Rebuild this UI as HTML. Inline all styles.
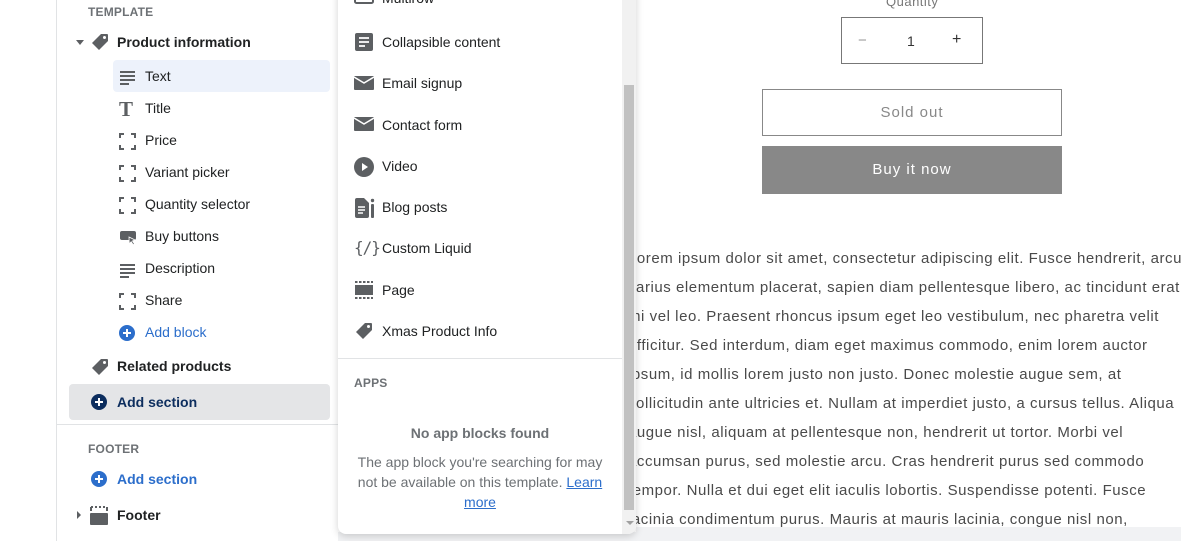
<!DOCTYPE html>
<html><head><meta charset="utf-8"><style>
*{box-sizing:border-box;margin:0;padding:0}
body{width:1181px;height:541px;overflow:hidden;background:#fff;font-family:"Liberation Sans",sans-serif;position:relative;color:#202223}
.abs{position:absolute}
.side{left:56px;top:0;width:282px;height:541px;border-left:1px solid #e1e3e5;background:#fff}
.hdr{font-size:12px;font-weight:bold;color:#6d7175;letter-spacing:0.2px}
.row{position:absolute;font-size:14px;display:flex;align-items:center}
.ico{position:absolute}
.b{font-weight:bold}
.blue{color:#2c6ecb}
.pop{left:338px;top:-10px;width:298px;height:544px;background:#fff;border-radius:0 0 8px 8px;box-shadow:0 2px 8px rgba(0,0,0,.18);z-index:5;overflow:hidden}
.pi{position:absolute;left:44px;font-size:14px;color:#202223}
.lorem{left:628px;font-size:15px;color:#4a4a4a;white-space:nowrap;letter-spacing:0.55px}
</style></head><body>
<div class="abs side">
  <div class="abs hdr" style="left:31px;top:5px">TEMPLATE</div>
  <svg class="ico" style="left:18px;top:38px" width="10" height="8"><path d="M1 2h8L5 7z" fill="#5c5f62"/></svg>
  <svg class="ico" style="left:33px;top:32px" width="20" height="20"><path d="M11 2h6a1 1 0 0 1 1 1v6l-9 9-7-7z" fill="#5c5f62"/><circle cx="14.5" cy="5.5" r="1.5" fill="#fff"/></svg>
  <div class="row b" style="left:60px;top:33px;height:18px">Product information</div>
  <div class="abs" style="left:56px;top:60px;width:217px;height:32px;background:#edf2fb;border-radius:4px"></div>
  <svg class="ico" style="left:62px;top:69px" width="18" height="16"><path d="M1 3h15M1 7h15M1 11h15M1 15h9" stroke="#5c5f62" stroke-width="2"/></svg>
  <div class="row" style="left:88px;top:68px">Text</div>
  <div class="ico b" style="left:62px;top:97px;font-family:'Liberation Serif',serif;font-size:21px;color:#5c5f62">T</div>
  <div class="row" style="left:88px;top:100px">Title</div>
  <svg class="ico" style="left:62px;top:133px" width="17" height="17"><path d="M1 5V1h4M12 1h4v4M16 12v4h-4M5 16H1v-4" stroke="#5c5f62" stroke-width="2" fill="none"/></svg>
  <div class="row" style="left:88px;top:132px">Price</div>
  <svg class="ico" style="left:62px;top:165px" width="17" height="17"><path d="M1 5V1h4M12 1h4v4M16 12v4h-4M5 16H1v-4" stroke="#5c5f62" stroke-width="2" fill="none"/></svg>
  <div class="row" style="left:88px;top:164px">Variant picker</div>
  <svg class="ico" style="left:62px;top:197px" width="17" height="17"><path d="M1 5V1h4M12 1h4v4M16 12v4h-4M5 16H1v-4" stroke="#5c5f62" stroke-width="2" fill="none"/></svg>
  <div class="row" style="left:88px;top:196px">Quantity selector</div>
  <svg class="ico" style="left:62px;top:230px" width="18" height="16"><rect x="1" y="1" width="16" height="9" rx="2" fill="#5c5f62"/><path d="M10 7l6 3-2.5 1 2 3-1.3.8-2-3-2 2z" fill="#5c5f62" stroke="#fff" stroke-width=".8"/></svg>
  <div class="row" style="left:88px;top:228px">Buy buttons</div>
  <svg class="ico" style="left:62px;top:262px" width="18" height="16"><path d="M1 3h15M1 7h15M1 11h15M1 15h9" stroke="#5c5f62" stroke-width="2"/></svg>
  <div class="row" style="left:88px;top:260px">Description</div>
  <svg class="ico" style="left:62px;top:293px" width="17" height="17"><path d="M1 5V1h4M12 1h4v4M16 12v4h-4M5 16H1v-4" stroke="#5c5f62" stroke-width="2" fill="none"/></svg>
  <div class="row" style="left:88px;top:292px">Share</div>
  <svg class="ico" style="left:62px;top:325px" width="16" height="16"><circle cx="8" cy="8" r="8" fill="#2c6ecb"/><path d="M8 4v8M4 8h8" stroke="#fff" stroke-width="2"/></svg>
  <div class="row blue" style="left:88px;top:324px">Add block</div>
  <svg class="ico" style="left:33px;top:357px" width="20" height="20"><path d="M11 2h6a1 1 0 0 1 1 1v6l-9 9-7-7z" fill="#5c5f62"/><circle cx="14.5" cy="5.5" r="1.5" fill="#fff"/></svg>
  <div class="row b" style="left:60px;top:358px">Related products</div>
  <div class="abs" style="left:12px;top:384px;width:261px;height:36px;background:#e4e5e7;border-radius:4px"></div>
  <svg class="ico" style="left:34px;top:394px" width="16" height="16"><circle cx="8" cy="8" r="8" fill="#0c2d5e"/><path d="M8 4v8M4 8h8" stroke="#fff" stroke-width="2"/></svg>
  <div class="row b" style="left:60px;top:394px;color:#0c2d5e">Add section</div>
  <div class="abs" style="left:0;top:424px;width:282px;height:1px;background:#e1e3e5"></div>
  <div class="abs hdr" style="left:31px;top:442px">FOOTER</div>
  <svg class="ico" style="left:34px;top:471px" width="16" height="16"><circle cx="8" cy="8" r="8" fill="#2c6ecb"/><path d="M8 4v8M4 8h8" stroke="#fff" stroke-width="2"/></svg>
  <div class="row b blue" style="left:60px;top:471px">Add section</div>
  <svg class="ico" style="left:19px;top:510px" width="6" height="10"><path d="M1 1l4 4-4 4z" fill="#5c5f62"/></svg>
  <svg class="ico" style="left:33px;top:506px" width="18" height="19"><path d="M1 1h2M5 1h2M9 1h2M13 1h2M17 1h0" stroke="#5c5f62" stroke-width="2"/><path d="M1 1v4M17 1v4" stroke="#5c5f62" stroke-width="2"/><rect x="0" y="7" width="18" height="12" rx="1" fill="#5c5f62"/></svg>
  <div class="row b" style="left:60px;top:507px">Footer</div>
</div>

<!-- preview -->
<div class="abs" style="left:636px;top:527px;width:545px;height:14px;background:#f1f2f4"></div>
<div class="abs" style="left:338px;top:532px;width:298px;height:9px;background:#f1f2f4"></div>
<div class="abs" style="left:886px;top:-6px;font-size:13px;color:#777;letter-spacing:.5px">Quantity</div>
<div class="abs" style="left:841px;top:17px;width:142px;height:47px;border:1px solid #777"></div>
<div class="abs" style="left:858px;top:32px;font-size:15px;color:#999">−</div>
<div class="abs" style="left:907px;top:33px;font-size:14px;color:#333">1</div>
<div class="abs" style="left:952px;top:31px;font-size:16px;color:#333">+</div>
<div class="abs" style="left:762px;top:89px;width:300px;height:47px;border:1px solid #888;text-align:center;line-height:46px;font-size:15px;color:#888;letter-spacing:1px">Sold out</div>
<div class="abs" style="left:762px;top:146px;width:300px;height:48px;background:#888;text-align:center;line-height:48px;font-size:15px;color:#fff;letter-spacing:1px">Buy it now</div>
<div class="abs lorem" style="top:250px">Lorem ipsum dolor sit amet, consectetur adipiscing elit. Fusce hendrerit, arcu</div>
<div class="abs lorem" style="top:279px">varius elementum placerat, sapien diam pellentesque libero, ac tincidunt erat</div>
<div class="abs lorem" style="top:308px">mi vel leo. Praesent rhoncus ipsum eget leo vestibulum, nec pharetra velit</div>
<div class="abs lorem" style="top:337px">efficitur. Sed interdum, diam eget maximus commodo, enim lorem auctor</div>
<div class="abs lorem" style="top:366px">ipsum, id mollis lorem justo non justo. Donec molestie augue sem, at</div>
<div class="abs lorem" style="top:395px">sollicitudin ante ultricies et. Nullam at imperdiet justo, a cursus tellus. Aliqua</div>
<div class="abs lorem" style="top:424px">augue nisl, aliquam at pellentesque non, hendrerit ut tortor. Morbi vel</div>
<div class="abs lorem" style="top:453px">accumsan purus, sed molestie arcu. Cras hendrerit purus sed commodo</div>
<div class="abs lorem" style="top:482px">tempor. Nulla et dui eget elit iaculis lobortis. Suspendisse potenti. Fusce</div>
<div class="abs lorem" style="top:511px">lacinia condimentum purus. Mauris at mauris lacinia, congue nisl non,</div>

<!-- popover -->
<div class="abs pop">
  <div class="abs" style="left:284px;top:0;width:14px;height:544px;background:#f1f1f1"></div>
  <div class="abs" style="left:286px;top:95px;width:10px;height:425px;background:#c1c1c1"></div>
  <svg class="abs" style="left:288px;top:531px" width="8" height="5"><path d="M0 0h8L4 4z" fill="#a0a0a0"/></svg>
  <svg class="abs" style="left:16px;top:2px" width="20" height="20"><rect x="1" y="1" width="18" height="10" rx="1.5" stroke="#5c5f62" stroke-width="2" fill="none"/><path d="M1 6h18" stroke="#5c5f62" stroke-width="2"/></svg>
  <div class="pi" style="top:0">Multirow</div>
  <svg class="abs" style="left:17px;top:43px" width="18" height="18"><rect width="18" height="18" rx="2" fill="#5c5f62"/><path d="M4 5h10M4 9h10M4 13h6" stroke="#fff" stroke-width="1.8"/></svg>
  <div class="pi" style="top:44px">Collapsible content</div>
  <svg class="abs" style="left:16px;top:86px" width="20" height="14"><rect width="20" height="14" rx="1" fill="#5c5f62"/><path d="M0 1l10 6 10-6" stroke="#fff" stroke-width="1.6" fill="none"/></svg>
  <div class="pi" style="top:85px">Email signup</div>
  <svg class="abs" style="left:16px;top:127px" width="20" height="14"><rect width="20" height="14" rx="1" fill="#5c5f62"/><path d="M0 1l10 6 10-6" stroke="#fff" stroke-width="1.6" fill="none"/></svg>
  <div class="pi" style="top:127px">Contact form</div>
  <svg class="abs" style="left:16px;top:167px" width="20" height="20"><circle cx="10" cy="10" r="10" fill="#5c5f62"/><path d="M8 6l6 4-6 4z" fill="#fff"/></svg>
  <div class="pi" style="top:168px">Video</div>
  <svg class="abs" style="left:17px;top:208px" width="20" height="20"><path d="M0 2a2 2 0 0 1 2-2h7l5 5v13a2 2 0 0 1-2 2H2a2 2 0 0 1-2-2z" fill="#5c5f62"/><path d="M3 9h7M3 12h7M3 15h5" stroke="#fff" stroke-width="1.6"/><rect x="16" y="6" width="3" height="14" rx="1" fill="#5c5f62"/><circle cx="17.5" cy="2.5" r="1.7" fill="#5c5f62"/></svg>
  <div class="pi" style="top:209px">Blog posts</div>
  <div class="abs" style="left:16px;top:248px;font-size:16px;color:#5c5f62;font-family:'DejaVu Sans Mono',monospace;letter-spacing:-1px">{/}</div>
  <div class="pi" style="top:250px">Custom Liquid</div>
  <svg class="abs" style="left:17px;top:291px" width="18" height="18"><path d="M0 1h18M0 17h18" stroke="#5c5f62" stroke-width="2" stroke-dasharray="2.5 1.5"/><rect x="0" y="4" width="18" height="10" fill="#5c5f62"/></svg>
  <div class="pi" style="top:292px">Page</div>
  <svg class="abs" style="left:16px;top:331px" width="20" height="20"><path d="M11 2h6a1 1 0 0 1 1 1v6l-9 9-7-7z" fill="#5c5f62"/><circle cx="14.5" cy="5.5" r="1.5" fill="#fff"/></svg>
  <div class="pi" style="top:333px">Xmas Product Info</div>
  <div class="abs" style="left:0;top:368px;width:284px;height:1px;background:#e1e3e5"></div>
  <div class="abs hdr" style="left:16px;top:386px">APPS</div>
  <div class="abs" style="left:0;top:435px;width:284px;text-align:center;font-size:14px;font-weight:bold;color:#6d7175">No app blocks found</div>
  <div class="abs" style="left:16px;top:462px;width:252px;text-align:center;font-size:14px;line-height:20px;color:#6d7175">The app block you're searching for may not be available on this template. <span style="color:#2c6ecb;text-decoration:underline">Learn more</span></div>
</div>
</body></html>
